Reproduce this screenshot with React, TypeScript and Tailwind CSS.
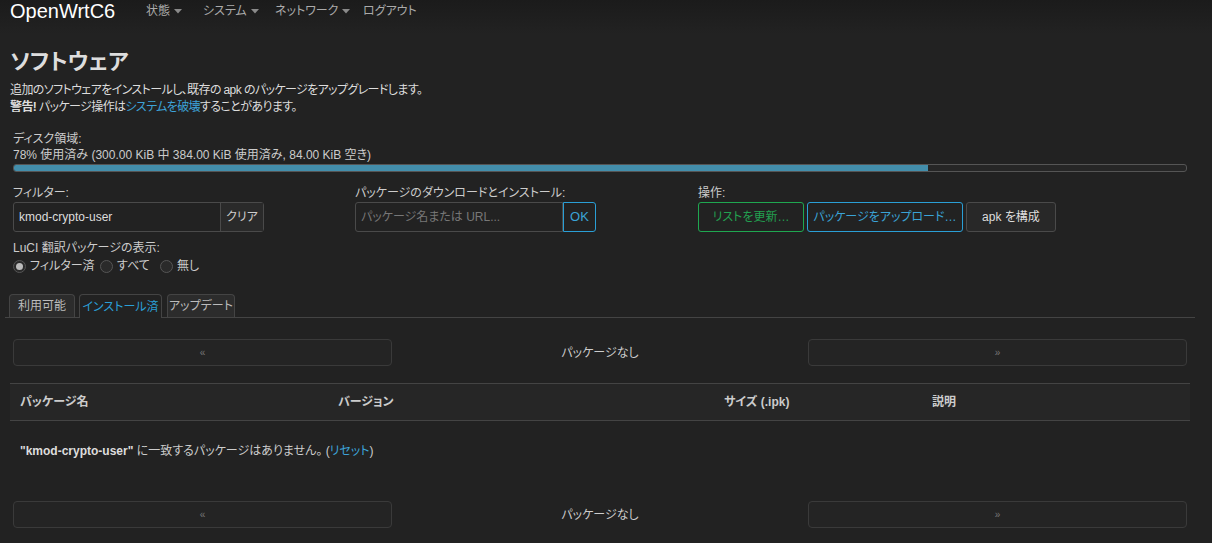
import React from "react";

const font = {
  fontFamily: '"Liberation Sans", "Noto Sans CJK JP", sans-serif',
  fontFeatureSettings: '"palt"',
};

function Caret() {
  return (
    <svg width="8" height="5" viewBox="0 0 8 5" className="ml-[4px] inline-block">
      <path d="M0 0 L8 0 L4 4.5 Z" fill="#8a8a8a" />
    </svg>
  );
}

function Radio({ checked, label, w }: { checked?: boolean; label: string; w: string }) {
  return (
    <span className={"flex items-center " + w}>
      <span className="w-[13px] h-[13px] rounded-full border border-[#555] bg-[#2a2a2a] flex items-center justify-center mr-[4px]">
        {checked && <span className="w-[7px] h-[7px] rounded-full bg-[#bbb]" />}
      </span>
      <span>{label}</span>
    </span>
  );
}

function Pager() {
  return (
    <div className="flex items-center h-[27px] mx-[8px]">
      <div className="w-[379px] h-[27px] border border-[#3a3a3a] rounded-[4px] bg-[#242424] flex items-center justify-center text-[10px] text-[#777]">«</div>
      <div className="flex-1 text-center text-[12px] text-[#ccc]">パッケージなし</div>
      <div className="w-[379px] h-[27px] border border-[#3a3a3a] rounded-[4px] bg-[#242424] flex items-center justify-center text-[10px] text-[#777]">»</div>
    </div>
  );
}

export default function App() {
  return (
    <div className="w-[1212px] h-[543px] bg-[#222] text-[#ccc] overflow-hidden" style={font}>
      <div className="h-[34px] bg-gradient-to-b from-[#1b1b1b] to-[#222] flex items-start pl-[10px]">
        <div className="text-[20px] text-white leading-[22px] w-[136px]">OpenWrtC6</div>
        <div className="flex items-center text-[12px] text-[#aaa] leading-[22px]">
          <span className="flex items-center w-[57px]">状態<Caret /></span>
          <span className="flex items-center w-[72px]">システム<Caret /></span>
          <span className="flex items-center w-[88px]">ネットワーク<Caret /></span>
          <span>ログアウト</span>
        </div>
      </div>

      <div className="w-[1200px] px-[5px]">
        <div className="pl-[5px] pt-[13px]">
          <h2 className="text-[22px] font-bold text-[#ddd] leading-[30px]">ソフトウェア</h2>
          <div className="text-[12px] leading-[17px] mt-[5px] text-[#ddd] tracking-[-0.6px]">
            <div>追加のソフトウェアをインストールし、既存の apk のパッケージをアップグレードします。</div>
            <div>
              <b>警告!</b> パッケージ操作は<span className="text-[#3da3d8]">システムを破壊</span>することがあります。
            </div>
          </div>
        </div>

        <div className="pl-[8px] pr-[8px] mt-[15px] text-[12px] leading-[16px]">
          <div>ディスク領域:</div>
          <div>78% 使用済み (300.00 KiB 中 384.00 KiB 使用済み, 84.00 KiB 空き)</div>
          <div className="mt-[1px] h-[8px] w-[1174px] border border-[#555] rounded-[3px] bg-[#262626] overflow-hidden">
            <div className="h-full bg-[#438eab] w-[78%]" />
          </div>

          <div className="flex mt-[12px]">
            <div className="w-[342px]">
              <div className="leading-[18px]">フィルター:</div>
              <div className="flex h-[30px] w-[251px] border border-[#4a4a4a] rounded-[3px] bg-[#222]">
                <div className="flex-1 flex items-center pl-[5px] text-[#ddd] border-r border-[#4a4a4a]">kmod-crypto-user</div>
                <div className="w-[42px] flex items-center justify-center bg-[#2a2a2a] text-[#ccc]">クリア</div>
              </div>
            </div>
            <div className="w-[343px]">
              <div className="leading-[18px]">パッケージのダウンロードとインストール:</div>
              <div className="flex h-[30px] w-[241px]">
                <div className="w-[208px] flex items-center pl-[5px] text-[#777] border border-[#4a4a4a] rounded-l-[3px]">パッケージ名または URL...</div>
                <div className="flex-1 flex items-center justify-center text-[#3aa3d6] text-[13px] border border-[#2a9fd6] rounded-r-[3px] bg-[#222]">OK</div>
              </div>
            </div>
            <div>
              <div className="leading-[18px]">操作:</div>
              <div className="flex h-[30px] gap-[3px] whitespace-nowrap">
                <div className="w-[106px] flex items-center justify-center border border-[#1fa750] rounded-[3px] text-[#22a050] bg-[#222]">リストを更新…</div>
                <div className="w-[156px] flex items-center justify-center border border-[#2a9fd6] rounded-[3px] text-[#3aa3d6] bg-[#222]">パッケージをアップロード…</div>
                <div className="w-[90px] flex items-center justify-center border border-[#4a4a4a] rounded-[3px] text-[#ddd] bg-[#282828]">apk を構成</div>
              </div>
            </div>
          </div>

          <div className="mt-[7px] leading-[18px]">LuCI 翻訳パッケージの表示:</div>
          <div className="flex items-center leading-[18px]">
            <Radio checked label="フィルター済" w="w-[87px]" />
            <Radio label="すべて" w="w-[60px]" />
            <Radio label="無し" w="w-[60px]" />
          </div>
        </div>

        <div className="mt-[19px] flex items-end border-b border-[#444] h-[24px] pl-[4px] text-[12px] whitespace-nowrap">
          <div className="h-[23px] w-[66px] mr-[4px] flex items-center justify-center border border-b-0 border-[#444] rounded-t-[4px] bg-[#2c2c2c] text-[#bbb]">利用可能</div>
          <div className="h-[24px] w-[83px] mr-[5px] flex items-center justify-center border border-b-0 border-[#444] rounded-t-[4px] bg-[#222] text-[#2a9fd6] -mb-[1px]">インストール済</div>
          <div className="h-[23px] w-[68px] flex items-center justify-center border border-b-0 border-[#444] rounded-t-[4px] bg-[#2c2c2c] text-[#bbb]">アップデート</div>
        </div>

        <div className="mt-[21px]">
          <Pager />
        </div>

        <div className="mt-[17px] mx-[5px] h-[38px] border-y border-[#444] bg-[#262626] flex items-center text-[12px] font-bold text-[#ccc]">
          <div className="w-[328px] pl-[10px]">パッケージ名</div>
          <div className="w-[386px]">バージョン</div>
          <div className="w-[208px]">サイズ (.ipk)</div>
          <div>説明</div>
        </div>

        <div className="pl-[15px] mt-[21px] text-[12px] leading-[18px] text-[#ccc]">
          <b className="text-[#ddd]">"kmod-crypto-user"</b> に一致するパッケージはありません。 (<span className="text-[#3da3d8]">リセット</span>)
        </div>

        <div className="mt-[41px]">
          <Pager />
        </div>
      </div>
    </div>
  );
}
